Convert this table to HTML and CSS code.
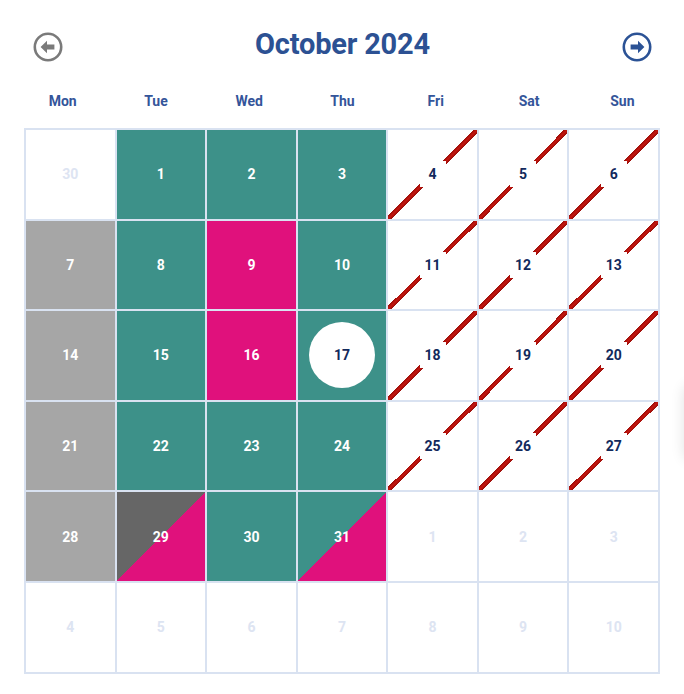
FILE: index.html
```html
<!DOCTYPE html>
<html lang="en">
<head>
<meta charset="utf-8">
<title>October 2024</title>
<link rel="stylesheet" href="styles.css">
</head>
<body>
<div class="calendar">
  <header class="cal-head">
    <button class="nav nav-prev" aria-label="Previous month">
      <svg viewBox="0 0 30 30" width="30" height="30"><circle cx="15" cy="15" r="13.2" fill="none" stroke="currentColor" stroke-width="2.6"/><path d="M7.6 15 L14 8.8 L14 12.4 L21.4 12.4 L21.4 17.6 L14 17.6 L14 21.2 Z" fill="currentColor"/></svg>
    </button>
    <h1 class="title">October 2024</h1>
    <button class="nav nav-next" aria-label="Next month">
      <svg viewBox="0 0 30 30" width="30" height="30"><circle cx="15" cy="15" r="13.2" fill="none" stroke="currentColor" stroke-width="2.6"/><path d="M22.4 15 L16 8.8 L16 12.4 L8.6 12.4 L8.6 17.6 L16 17.6 L16 21.2 Z" fill="currentColor"/></svg>
    </button>
  </header>
  <div class="weekdays">
    <div>Mon</div><div>Tue</div><div>Wed</div><div>Thu</div><div>Fri</div><div>Sat</div><div>Sun</div>
  </div>
  <div class="grid">
    <div class="cell out"><span>30</span></div>
    <div class="cell teal"><span>1</span></div>
    <div class="cell teal"><span>2</span></div>
    <div class="cell teal"><span>3</span></div>
    <div class="cell strike"><span>4</span></div>
    <div class="cell strike"><span>5</span></div>
    <div class="cell strike"><span>6</span></div>

    <div class="cell gray"><span>7</span></div>
    <div class="cell teal"><span>8</span></div>
    <div class="cell pink"><span>9</span></div>
    <div class="cell teal"><span>10</span></div>
    <div class="cell strike"><span>11</span></div>
    <div class="cell strike"><span>12</span></div>
    <div class="cell strike"><span>13</span></div>

    <div class="cell gray"><span>14</span></div>
    <div class="cell teal"><span>15</span></div>
    <div class="cell pink"><span>16</span></div>
    <div class="cell teal today"><span>17</span></div>
    <div class="cell strike"><span>18</span></div>
    <div class="cell strike"><span>19</span></div>
    <div class="cell strike"><span>20</span></div>

    <div class="cell gray"><span>21</span></div>
    <div class="cell teal"><span>22</span></div>
    <div class="cell teal"><span>23</span></div>
    <div class="cell teal"><span>24</span></div>
    <div class="cell strike"><span>25</span></div>
    <div class="cell strike"><span>26</span></div>
    <div class="cell strike"><span>27</span></div>

    <div class="cell gray"><span>28</span></div>
    <div class="cell split-gray"><span>29</span></div>
    <div class="cell teal"><span>30</span></div>
    <div class="cell split-teal"><span>31</span></div>
    <div class="cell out"><span>1</span></div>
    <div class="cell out"><span>2</span></div>
    <div class="cell out"><span>3</span></div>

    <div class="cell out"><span>4</span></div>
    <div class="cell out"><span>5</span></div>
    <div class="cell out"><span>6</span></div>
    <div class="cell out"><span>7</span></div>
    <div class="cell out"><span>8</span></div>
    <div class="cell out"><span>9</span></div>
    <div class="cell out"><span>10</span></div>
  </div>
</div>
<div class="edge-card"></div>
</body>
</html>
```
FILE: styles.css
```css
html, body {
  margin: 0;
  padding: 0;
  background: #ffffff;
  overflow: hidden;
}
body {
  font-family: Roboto, "Open Sans", "Noto Sans", sans-serif;
  width: 684px;
  height: 694px;
}
.calendar {
  padding-top: 26px;
}
.cal-head {
  display: flex;
  align-items: center;
  justify-content: space-between;
  height: 36px;
  padding: 0 32px 0 33px;
}
.nav {
  border: 0;
  background: none;
  padding: 0;
  margin-top: 5px;
  width: 30px;
  height: 30px;
  display: flex;
}
.nav-prev { color: #7a7a7a; }
.nav-next { color: #2b5295; }
.title {
  margin: 0;
  font-size: 29px;
  font-weight: 700;
  color: #2c5193;
  letter-spacing: -0.2px;
  line-height: 36px;
}
.weekdays {
  display: grid;
  grid-template-columns: repeat(7, 1fr);
  width: 653px;
  margin: 28px 0 0 16px;
  height: 22px;
  line-height: 22px;
  text-align: center;
  font-size: 14px;
  font-weight: 700;
  color: #34559a;
}
.grid {
  display: grid;
  grid-template-columns: repeat(7, 1fr);
  grid-auto-rows: 88.6px;
  gap: 2px;
  padding: 2px;
  width: 632px;
  margin: 16px 0 0 24px;
  background: #d9e2f1;
}
.cell {
  background: #ffffff;
  display: flex;
  align-items: center;
  justify-content: center;
  font-size: 14px;
  font-weight: 700;
  color: #ffffff;
}
.cell span {
  display: flex;
  align-items: center;
  justify-content: center;
}
.out { color: #dde4f2; }
.teal { background: #3d9189; }
.pink { background: #e0117c; }
.gray { background: #a6a6a6; }
.split-gray { background: linear-gradient(to bottom right, #666666 50%, #e0117c 50%); }
.split-teal { background: linear-gradient(to bottom right, #3d9189 50%, #e0117c 50%); }
.strike {
  color: #12295c;
  background:
    linear-gradient(to bottom right,
      transparent calc(50% - 2.2px),
      #9e0f0a calc(50% - 2.2px),
      #c4150e 50%,
      #9e0f0a calc(50% + 2.2px),
      transparent calc(50% + 2.2px)),
    #ffffff;
}
.strike span {
  background: #ffffff;
  width: 26px;
  height: 26px;
}
.today span {
  width: 66px;
  height: 66px;
  border-radius: 50%;
  background: #ffffff;
  color: #12295c;
}
.edge-card {
  position: fixed;
  left: 100%;
  top: 385px;
  width: 40px;
  height: 75px;
  border-radius: 8px;
  box-shadow: 0 0 14px rgba(0, 0, 0, 0.12);
}
```
